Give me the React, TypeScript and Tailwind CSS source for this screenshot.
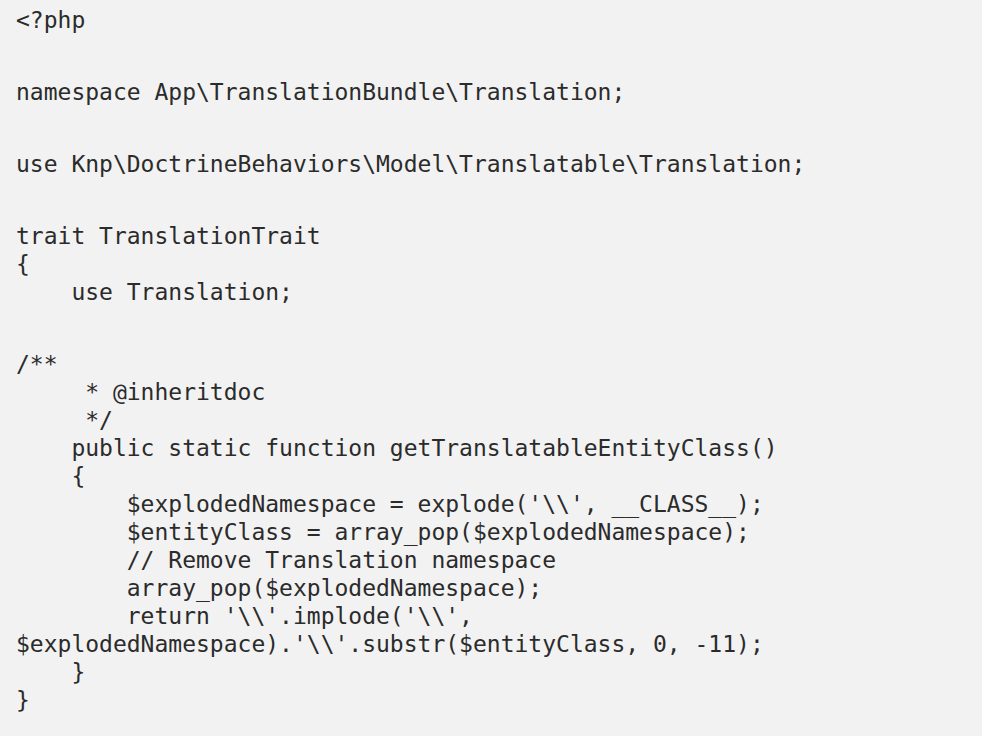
const blocks: string[][] = [
  ['<?php'],
  ['namespace App\\TranslationBundle\\Translation;'],
  ['use Knp\\DoctrineBehaviors\\Model\\Translatable\\Translation;'],
  ['trait TranslationTrait', '{', '    use Translation;'],
  [
    '/**',
    '     * @inheritdoc',
    '     */',
    '    public static function getTranslatableEntityClass()',
    '    {',
    "        $explodedNamespace = explode('\\\\', __CLASS__);",
    '        $entityClass = array_pop($explodedNamespace);',
    '        // Remove Translation namespace',
    '        array_pop($explodedNamespace);',
    "        return '\\\\'.implode('\\\\',",
    "$explodedNamespace).'\\\\'.substr($entityClass, 0, -11);",
    '    }',
    '}',
  ],
]

export default function App() {
  return (
    <div className="w-[982px] h-[736px] bg-[#f2f2f2] overflow-hidden">
      <div className="flex flex-col gap-[44px] pl-4 pt-[6px] text-[#2b2b2b] text-[23px] leading-[28px] font-['DejaVu_Sans_Mono',monospace]">
        {blocks.map((lines, i) => (
          <div key={i}>
            {lines.map((line, j) => (
              <div key={j} className="whitespace-pre">{line}</div>
            ))}
          </div>
        ))}
      </div>
    </div>
  )
}
